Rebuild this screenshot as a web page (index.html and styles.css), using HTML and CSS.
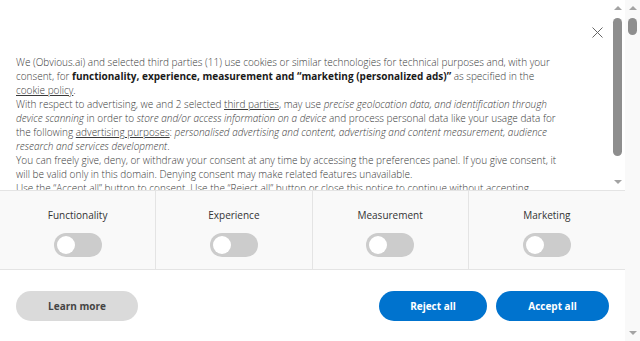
FILE: index.html
```html
<!DOCTYPE html>
<html lang="en">
<head>
<meta charset="utf-8">
<title>Cookie notice</title>
<link rel="stylesheet" href="styles.css">
</head>
<body>
<div class="window">
  <div class="banner">
    <div class="notice">
      <div class="notice-body">
        <div class="notice-head">
          <button class="close" aria-label="Close">
            <svg width="11" height="11" viewBox="0 0 11 11"><path d="M0.5 0.5 L10.5 10.5 M10.5 0.5 L0.5 10.5" stroke="#666" stroke-width="1" fill="none"/></svg>
          </button>
        </div>
        <div class="notice-text">
          <p>We (Obvious.ai) and selected third parties (11) use cookies or similar technologies for technical purposes and, with your consent, for <b>functionality, experience, measurement and “marketing (personalized ads)”</b> as specified in the <a href="#">cookie policy</a>.</p>
          <p>With respect to advertising, we and 2 selected <a href="#">third parties</a>, may use <i>precise geolocation data, and identification through device scanning</i> in order to <i>store and/or access information on a device</i> and process personal data like your usage data for the following <a href="#">advertising purposes</a>: <i>personalised advertising and content, advertising and content measurement, audience research and services development</i>.</p>
          <p>You can freely give, deny, or withdraw your consent at any time by accessing the preferences panel. If you give consent, it will be valid only in this domain. Denying consent may make related features unavailable.</p>
          <p>Use the “Accept all” button to consent. Use the “Reject all” button or close this notice to continue without accepting.</p>
        </div>
      </div>
      <div class="sbar sbar-inner">
        <span class="arrow-up"></span>
        <span class="thumb thumb-inner"></span>
        <span class="sbar-fill"></span>
        <span class="arrow-down"></span>
      </div>
    </div>
    <div class="prefs">
      <div class="pref"><span class="pref-label">Functionality</span><span class="toggle"><span class="knob"></span></span></div>
      <div class="pref"><span class="pref-label">Experience</span><span class="toggle"><span class="knob"></span></span></div>
      <div class="pref"><span class="pref-label">Measurement</span><span class="toggle"><span class="knob"></span></span></div>
      <div class="pref"><span class="pref-label">Marketing</span><span class="toggle"><span class="knob"></span></span></div>
    </div>
    <div class="actions">
      <button class="btn btn-grey">Learn more</button>
      <div class="spacer"></div>
      <button class="btn btn-blue">Reject all</button>
      <button class="btn btn-blue btn-accept">Accept all</button>
    </div>
  </div>
  <div class="sbar sbar-page">
    <span class="arrow-up"></span>
    <span class="thumb thumb-page"></span>
    <span class="sbar-fill"></span>
    <span class="arrow-down"></span>
  </div>
</div>
</body>
</html>
```
FILE: styles.css
```css
html, body {
  margin: 0;
  padding: 0;
}
body {
  font-family: "Open Sans", "Liberation Sans", sans-serif;
  background: #fff;
  overflow: hidden;
}
.window {
  display: flex;
  height: 341px;
}
.banner {
  flex: 1;
  min-width: 0;
  display: flex;
  flex-direction: column;
  background: #fff;
}
.notice {
  height: 190px;
  display: flex;
  flex: none;
}
.notice-body {
  flex: 1;
  min-width: 0;
  overflow: hidden;
}
.notice-head {
  height: 55px;
  display: flex;
  justify-content: flex-end;
  align-items: flex-start;
  padding-right: 7px;
}
.close {
  margin-top: 27px;
  width: 11px;
  height: 11px;
  padding: 0;
  border: 0;
  background: none;
  display: flex;
  cursor: pointer;
}
.notice-text {
  padding: 0 48px 16px 16px;
  font-size: 10px;
  font-weight: 300;
  line-height: 14px;
  color: #3a3a3a;
}
.notice-text p {
  margin: 0;
}
.notice-text b {
  color: #1a1a1a;
  font-weight: 700;
}
.notice-text a {
  color: #3a3a3a;
  text-decoration: underline;
}
/* scrollbars */
.sbar {
  width: 15px;
  flex: none;
  display: flex;
  flex-direction: column;
  align-items: center;
}
.sbar-inner {
  background: #fff;
}
.sbar-page {
  background: #f9f9f9;
}
.arrow-up {
  margin-top: 6px;
  width: 0;
  height: 0;
  border-left: 4px solid transparent;
  border-right: 4px solid transparent;
  border-bottom: 4px solid #a3a3a3;
}
.arrow-down {
  margin-bottom: 6px;
  width: 0;
  height: 0;
  border-left: 4px solid transparent;
  border-right: 4px solid transparent;
  border-top: 4px solid #a3a3a3;
}
.thumb {
  margin-top: 8px;
  width: 9px;
  border-radius: 4.5px;
  background: #8e8e8e;
}
.thumb-inner {
  height: 138px;
}
.thumb-page {
  height: 17px;
}
.sbar-fill {
  flex: 1;
}
/* preferences */
.prefs {
  display: grid;
  grid-template-columns: repeat(4, 1fr);
  background: #f9f9f9;
  border-top: 1px solid #e4e4e4;
  border-bottom: 1px solid #e4e4e4;
  height: 78px;
  flex: none;
}
.pref {
  display: flex;
  flex-direction: column;
  align-items: center;
  padding-top: 17px;
  gap: 11px;
  border-right: 1px solid #e4e4e4;
}
.pref:last-child {
  border-right: 0;
}
.pref-label {
  font-size: 10px;
  line-height: 14px;
  color: #333;
}
.toggle {
  width: 48px;
  height: 24px;
  border-radius: 12px;
  background: #cccccc;
  display: flex;
  align-items: center;
  padding-left: 3px;
  box-sizing: border-box;
}
.knob {
  width: 18px;
  height: 18px;
  border-radius: 50%;
  background: #fff;
}
.actions {
  display: flex;
  align-items: center;
  padding: 21px 16px 0 16px;
}
.spacer {
  flex: 1;
}
.btn {
  height: 30px;
  border: 0;
  border-radius: 15px;
  font-family: "Open Sans", "Liberation Sans", sans-serif;
  font-weight: 700;
  font-size: 10px;
  padding: 0;
  cursor: pointer;
}
.btn-grey {
  width: 122px;
  background: #dadada;
  color: #444;
}
.btn-blue {
  width: 108px;
  background: #0073ce;
  color: #fff;
}
.btn-accept {
  width: 113px;
  margin-left: 9px;
}
```
